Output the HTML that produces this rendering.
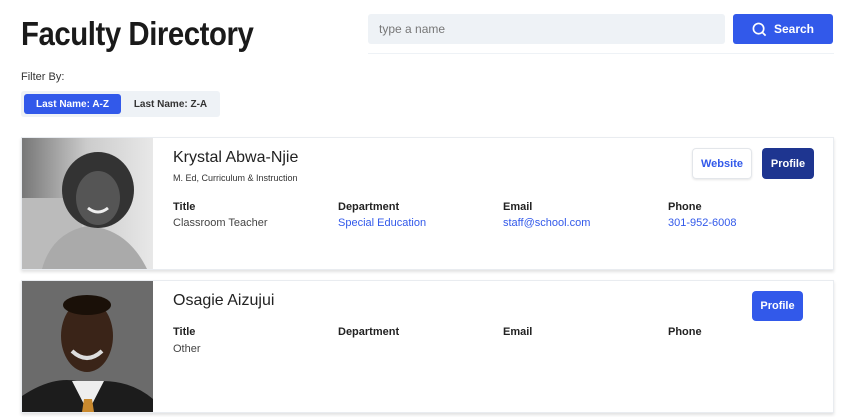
<!DOCTYPE html>
<html><head><meta charset="utf-8"><style>
*{box-sizing:border-box;margin:0;padding:0}
body{width:864px;height:417px;background:#fff;font-family:"Liberation Sans",sans-serif;position:relative;overflow:hidden;color:#222}
.abs{position:absolute}
h1{position:absolute;left:21px;top:15px;font-size:33px;font-weight:bold;color:#1a1a1a;letter-spacing:-0.5px;transform:scaleX(0.89);transform-origin:left top;white-space:nowrap}
.inp{left:368px;top:14px;width:357px;height:30px;background:#eef2f6;border-radius:3px;font-size:12px;color:#777;padding:8px 11px}
.line{left:368px;top:53px;width:466px;height:1px;background:#eef2f6}
.sbtn{left:733px;top:14px;width:100px;height:30px;background:#3259ea;border-radius:3px;color:#fff;font-size:12px;font-weight:bold;display:flex;align-items:center;justify-content:center;gap:7px}
.flt{left:21px;top:71px;font-size:11px;color:#333}
.seg{left:21px;top:91px;width:199px;height:26px;background:#eef2f6;border-radius:3px}
.a{left:24px;top:94px;width:97px;height:20px;background:#3259ea;border-radius:3px;color:#fff;font-size:10px;font-weight:bold;text-align:center;line-height:21px}
.b{left:122px;top:94px;width:97px;height:20px;color:#333;font-size:10px;font-weight:bold;text-align:center;line-height:21px}
.card{left:21px;width:813px;height:133px;background:#fff;border:1px solid #e9ecf0;box-shadow:0 2px 3px rgba(0,0,0,.12)}
.name{font-size:16px;color:#222}
.lbl{font-size:11px;font-weight:bold;color:#222}
.val{font-size:11px;color:#444}
.lnk{font-size:11px;color:#3259ea}
.btn{height:31px;border-radius:4px;font-size:11px;font-weight:bold;display:flex;align-items:center;justify-content:center}
</style></head><body>
<h1>Faculty Directory</h1>
<div class="abs inp">type a name</div>
<div class="abs line"></div>
<div class="abs sbtn"><svg width="15" height="15" viewBox="0 0 16 16" fill="none" stroke="#fff" stroke-width="1.8"><circle cx="7" cy="7" r="5.5"/><path d="M11 11l3.5 3.5"/></svg>Search</div>
<div class="abs flt">Filter By:</div>
<div class="abs seg"></div>
<div class="abs a">Last Name: A-Z</div>
<div class="abs b">Last Name: Z-A</div>

<div class="abs card" style="top:137px"></div>
<svg class="abs" style="left:22px;top:138px" width="131" height="131" viewBox="0 0 131 131">
<defs><linearGradient id="g1" x1="0" x2="1"><stop offset="0" stop-color="#777"/><stop offset=".5" stop-color="#ccc"/><stop offset="1" stop-color="#e8e8e8"/></linearGradient></defs>
<rect width="131" height="131" fill="url(#g1)"/>
<rect y="60" width="60" height="71" fill="#bbb"/>
<path d="M20 131 Q30 95 65 88 Q105 90 125 131Z" fill="#aaa"/>
<ellipse cx="76" cy="52" rx="36" ry="38" fill="#333"/>
<ellipse cx="76" cy="60" rx="22" ry="27" fill="#555"/>
<path d="M66 70 Q76 78 86 70" stroke="#eee" stroke-width="3" fill="none"/>
</svg>
<div class="abs name" style="left:173px;top:149px">Krystal Abwa-Njie</div>
<div class="abs" style="left:173px;top:173px;font-size:9px;color:#333">M. Ed, Curriculum &amp; Instruction</div>
<div class="abs lbl" style="left:173px;top:201px">Title</div>
<div class="abs val" style="left:173px;top:217px">Classroom Teacher</div>
<div class="abs lbl" style="left:338px;top:201px">Department</div>
<div class="abs lnk" style="left:338px;top:217px">Special Education</div>
<div class="abs lbl" style="left:503px;top:201px">Email</div>
<div class="abs lnk" style="left:503px;top:217px">staff@school.com</div>
<div class="abs lbl" style="left:668px;top:201px">Phone</div>
<div class="abs lnk" style="left:668px;top:217px">301-952-6008</div>
<div class="abs btn" style="left:692px;top:148px;width:60px;border:1px solid #e3e6ea;color:#3259ea;box-shadow:0 1px 2px rgba(0,0,0,.1)">Website</div>
<div class="abs btn" style="left:762px;top:148px;width:52px;background:#1e3590;color:#fff">Profile</div>

<div class="abs card" style="top:280px"></div>
<svg class="abs" style="left:22px;top:281px" width="131" height="131" viewBox="0 0 131 131">
<rect width="131" height="131" fill="#6b6b6b"/>
<path d="M0 131 L0 115 Q30 95 55 100 L80 100 Q110 100 131 118 L131 131Z" fill="#1c1c1c"/>
<path d="M50 100 L66 131 L82 100Z" fill="#eee"/>
<path d="M62 118 L70 118 L72 131 L60 131Z" fill="#c9892e"/>
<ellipse cx="65" cy="55" rx="26" ry="36" fill="#3a2418"/>
<ellipse cx="65" cy="24" rx="24" ry="10" fill="#1a1008"/>
<path d="M50 70 Q65 84 80 70" stroke="#ddd" stroke-width="4" fill="none"/>
</svg>
<div class="abs name" style="left:173px;top:292px">Osagie Aizujui</div>
<div class="abs lbl" style="left:173px;top:326px">Title</div>
<div class="abs val" style="left:173px;top:343px">Other</div>
<div class="abs lbl" style="left:338px;top:326px">Department</div>
<div class="abs lbl" style="left:503px;top:326px">Email</div>
<div class="abs lbl" style="left:668px;top:326px">Phone</div>
<div class="abs btn" style="left:752px;top:291px;width:51px;height:30px;background:#3259ea;color:#fff">Profile</div>
</body></html>
